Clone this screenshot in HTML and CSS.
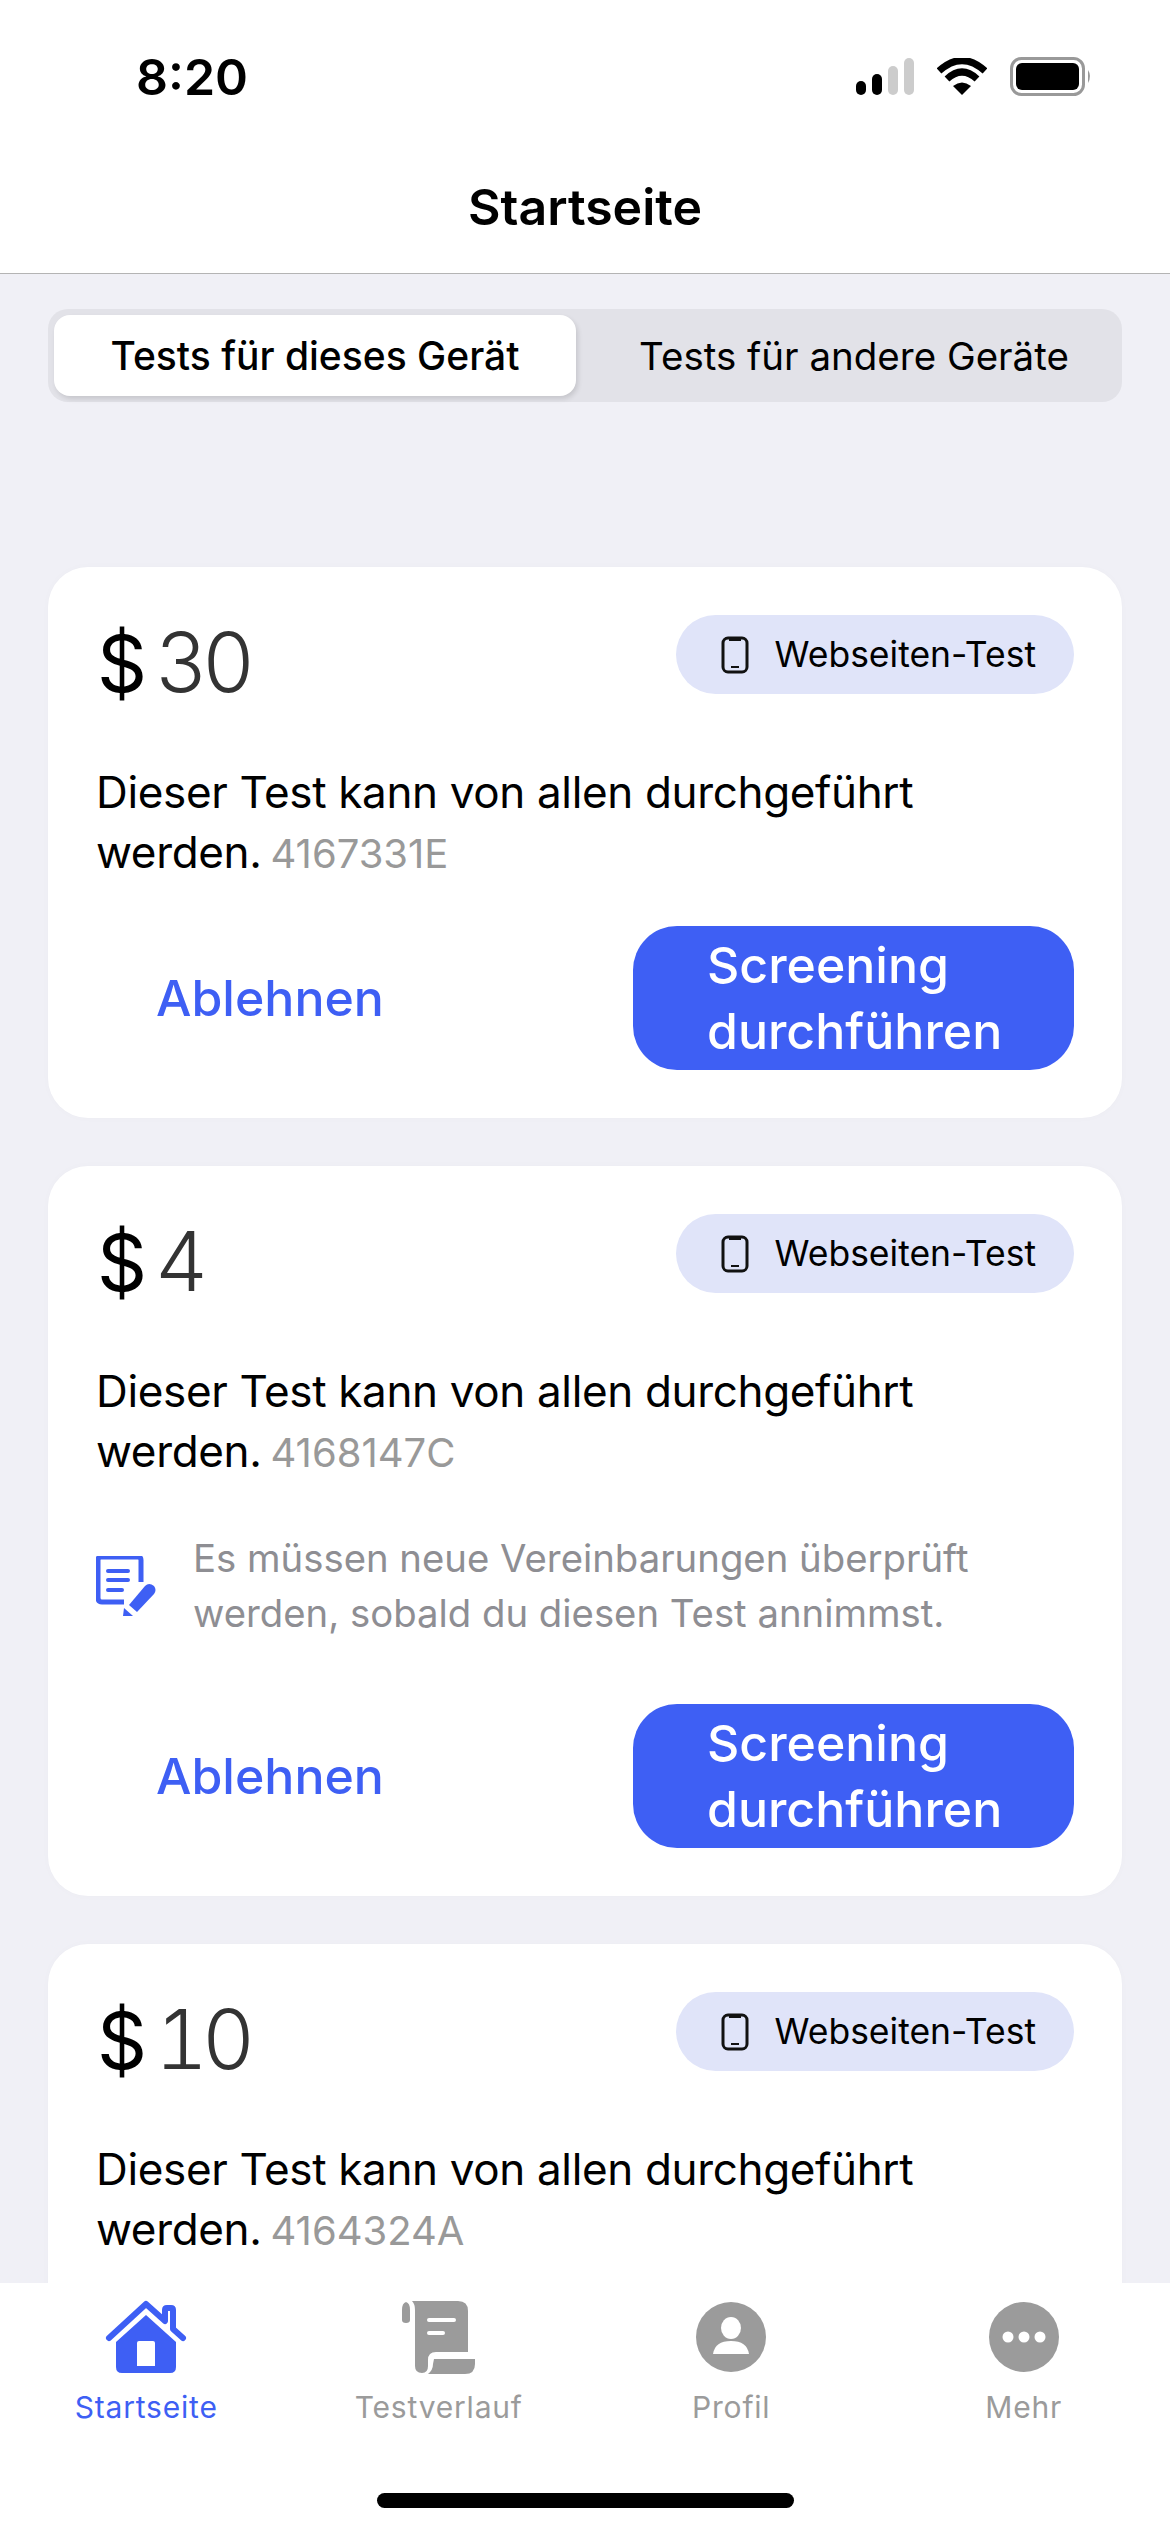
FILE: index.html
```html
<!DOCTYPE html>
<html lang="de">
<head>
  <meta charset="UTF-8">
  <meta name="viewport" content="width=device-width, initial-scale=1.0">
  <title>Startseite</title>
  <link rel="stylesheet" href="styles.css">
</head>
<body>
  <div class="app">
    <div class="top">
      <div class="status">
        <span class="time">8:20</span>
        <div class="status-icons">
          <svg width="58" height="38" viewBox="0 0 58 38"><rect x="0" y="23" width="10" height="14" rx="5" fill="#000"/><rect x="16" y="16" width="10" height="21" rx="5" fill="#000"/><rect x="32" y="8" width="10" height="29" rx="5" fill="#ccc"/><rect x="48" y="0" width="10" height="37" rx="5" fill="#ccc"/></svg>
          <svg class="wifi" width="50" height="38" viewBox="0 0 50 38"><path d="M25 37 L16 28 Q25 21 34 28 Z" fill="#000"/><path d="M2 13 Q25 -8 48 13" fill="none" stroke="#000" stroke-width="7"/><path d="M10 21 Q25 7 40 21" fill="none" stroke="#000" stroke-width="7"/></svg>
          <svg class="battery" width="82" height="40" viewBox="0 0 82 40"><rect x="1.5" y="1.5" width="72" height="36" rx="10" fill="none" stroke="#999" stroke-width="3"/><rect x="6" y="6" width="63" height="27" rx="6" fill="#000"/><path d="M78 13 Q82 19 78 26 Z" fill="#999"/></svg>
        </div>
      </div>
      <h1 class="title">Startseite</h1>
    </div>

    <div class="content">
      <div class="segment">
        <div class="seg-item seg-active">Tests für dieses Gerät</div>
        <div class="seg-item">Tests für andere Geräte</div>
      </div>

      <div class="card">
        <div class="card-head">
          <div class="price"><span class="cur">$</span>30</div>
          <div class="chip">
            <svg width="28" height="38" viewBox="0 0 28 38"><rect x="2" y="2" width="24" height="34" rx="5" fill="none" stroke="#111" stroke-width="3"/><path d="M8 4 H20 M10 31 H18" stroke="#111" stroke-width="2"/></svg>
            Webseiten-Test
          </div>
        </div>
        <p class="desc">Dieser Test kann von allen durchgeführt werden. <span class="code">4167331E</span></p>
        <div class="actions">
          <span class="decline">Ablehnen</span>
          <button class="go">Screening durchführen</button>
        </div>
      </div>

      <div class="card">
        <div class="card-head">
          <div class="price"><span class="cur">$</span>4</div>
          <div class="chip">
            <svg width="28" height="38" viewBox="0 0 28 38"><rect x="2" y="2" width="24" height="34" rx="5" fill="none" stroke="#111" stroke-width="3"/><path d="M8 4 H20 M10 31 H18" stroke="#111" stroke-width="2"/></svg>
            Webseiten-Test
          </div>
        </div>
        <p class="desc">Dieser Test kann von allen durchgeführt werden. <span class="code">4168147C</span></p>
        <div class="note">
          <svg width="60" height="60" viewBox="0 0 60 60"><path d="M28 46 H6 Q2 46 2 42 V4 Q2 1 5 1 H42 Q45 1 45 4 V26" fill="none" stroke="#3e5ff4" stroke-width="5"/><path d="M12 15 H32 M12 24 H32 M12 34 H26" stroke="#3e5ff4" stroke-width="4" stroke-linecap="round"/><path d="M33 49 L49 30 Q53 26 58 30 Q61 34 58 38 L41 56 Z" fill="#3e5ff4"/><path d="M28 52 L37 60 L27 60 Z" fill="#3e5ff4"/></svg>
          <span>Es müssen neue Vereinbarungen überprüft werden, sobald du diesen Test annimmst.</span>
        </div>
        <div class="actions">
          <span class="decline">Ablehnen</span>
          <button class="go">Screening durchführen</button>
        </div>
      </div>

      <div class="card">
        <div class="card-head">
          <div class="price"><span class="cur">$</span>10</div>
          <div class="chip">
            <svg width="28" height="38" viewBox="0 0 28 38"><rect x="2" y="2" width="24" height="34" rx="5" fill="none" stroke="#111" stroke-width="3"/><path d="M8 4 H20 M10 31 H18" stroke="#111" stroke-width="2"/></svg>
            Webseiten-Test
          </div>
        </div>
        <p class="desc">Dieser Test kann von allen durchgeführt werden. <span class="code">4164324A</span></p>
      </div>
    </div>

    <div class="tabbar">
      <div class="tabs">
        <div class="tab tab-active">
          <svg width="82" height="74" viewBox="0 0 82 74"><path d="M4 38 L41 4 L60 21 V10 Q60 8 62 8 H66 Q68 8 68 10 V29 L78 38" fill="none" stroke="#3e5ff4" stroke-width="6" stroke-linecap="round" stroke-linejoin="round"/><path d="M41 15 L71 42 V67 Q71 73 65 73 H17 Q11 73 11 67 V42 Z M32 43 Q32 41 34 41 H48 Q50 41 50 43 V66 H32 Z" fill="#3e5ff4" fill-rule="evenodd"/></svg>
          <span>Startseite</span>
        </div>
        <div class="tab">
          <svg width="74" height="74" viewBox="0 0 74 74"><path d="M10 1 H56 Q66 1 66 11 V52 H34 Q26 52 26 60 V66 Q26 73 20 73 Q13 73 13 66 V10 Q13 4 10 1 Z" fill="#9b9b9b"/><path d="M0 10 Q0 3 4 2 Q8 3 8 10 V20 Q8 23 4 23 Q0 23 0 20 Z M32 59 H73 V64 Q73 74 63 74 H26 Q31 70 31 64 Z" fill="#9b9b9b"/><path d="M27 20 H52 M27 33 H41" stroke="#fff" stroke-width="4" stroke-linecap="round"/></svg>
          <span>Testverlauf</span>
        </div>
        <div class="tab">
          <svg width="70" height="74" viewBox="0 0 70 70"><circle cx="35" cy="35" r="35" fill="#9b9b9b"/><ellipse cx="35" cy="26" rx="10" ry="11" fill="#fff"/><path d="M17 52 Q19 39 35 39 Q51 39 53 52 Z" fill="#fff"/></svg>
          <span>Profil</span>
        </div>
        <div class="tab">
          <svg width="70" height="74" viewBox="0 0 70 70"><circle cx="35" cy="35" r="35" fill="#9b9b9b"/><circle cx="19" cy="35" r="5.5" fill="#fff"/><circle cx="35" cy="35" r="5.5" fill="#fff"/><circle cx="51" cy="35" r="5.5" fill="#fff"/></svg>
          <span>Mehr</span>
        </div>
      </div>
      <div class="home-bar"></div>
    </div>
  </div>
</body>
</html>
```

FILE: styles.css
```css
body {
  font-family: Inter, "Liberation Sans", sans-serif;
  margin: 0;
  padding: 0;
  color: #000;
  background-color: #f0f0f6;
}

.app {
  width: 1170px;
  height: 2532px;
  display: flex;
  flex-direction: column;
  overflow: hidden;
}

.top {
  height: 273px;
  flex-shrink: 0;
  background-color: #fff;
  border-bottom: 1px solid #b4b4b4;
}

.status {
  display: flex;
  justify-content: space-between;
  align-items: center;
  height: 38px;
  padding: 58px 78px 0 136px;
}

.time {
  font-size: 50px;
  font-weight: 600;
}

.status-icons {
  display: flex;
  align-items: center;
  gap: 23px;
}

.title {
  margin: 0;
  padding-top: 81px;
  font-size: 50px;
  line-height: 60px;
  font-weight: 600;
  text-align: center;
}

.content {
  flex: 1;
  min-height: 0;
  overflow: hidden;
  padding: 35px 48px 0;
}

.segment {
  display: flex;
  height: 93px;
  box-sizing: border-box;
  padding: 6px;
  margin-bottom: 165px;
  border-radius: 20px;
  background-color: #e2e2e8;
}

.seg-item {
  display: flex;
  align-items: center;
  justify-content: center;
  box-sizing: border-box;
  width: 540px;
  padding-left: 16px;
  font-size: 38.5px;
}

.seg-active {
  width: 522px;
  padding-left: 0;
  font-size: 39px;
  font-weight: 500;
  background-color: #fff;
  border-radius: 16px;
  box-shadow: 2px 3px 5px rgba(0, 0, 0, 0.12);
}

.card {
  padding: 48px;
  margin-bottom: 48px;
  background-color: #fff;
  border-radius: 40px;
  box-shadow: 0 0 8px rgba(0, 0, 0, 0.02);
}

.card-head {
  display: flex;
  justify-content: space-between;
  align-items: flex-start;
}

.price {
  height: 79px;
  font-size: 82px;
  line-height: 95px;
  font-weight: 300;
  font-variant-numeric: tabular-nums;
  letter-spacing: -6px;
  color: #333;
  padding-left: 1px;
}

.cur {
  color: #000;
  margin-right: 8px;
  font-size: 78px;
  font-weight: 400;
  letter-spacing: 0;
}

.chip {
  display: flex;
  align-items: center;
  gap: 26px;
  height: 79px;
  box-sizing: border-box;
  padding: 0 38px 0 45px;
  border-radius: 40px;
  background-color: #e0e4f9;
  font-size: 35.5px;
}

.desc {
  margin: 68px 0 42px;
  max-width: 900px;
  font-size: 44px;
  letter-spacing: -0.35px;
  line-height: 60px;
}

.code {
  margin-left: -3px;
  font-size: 40px;
  letter-spacing: 0;
  color: #999;
}

.note {
  display: flex;
  align-items: center;
  gap: 37px;
  margin: 48px 0 63px;
  font-size: 38.3px;
  line-height: 55px;
  color: #8e8e93;
}

.note span {
  max-width: 800px;
}

.actions {
  display: flex;
  justify-content: space-between;
  align-items: center;
}

.decline {
  padding-left: 60px;
  font-size: 50px;
  font-weight: 500;
  color: #3e5ff4;
}

.go {
  width: 441px;
  height: 144px;
  padding: 0 60px 0 74px;
  border: none;
  border-radius: 44px;
  background-color: #3e5ff4;
  color: #fff;
  font-family: inherit;
  font-size: 50px;
  line-height: 66px;
  font-weight: 500;
  text-align: left;
}

.tabbar {
  height: 249px;
  flex-shrink: 0;
  background-color: #fff;
}

.tabs {
  display: grid;
  grid-template-columns: repeat(4, 1fr);
  padding-top: 17px;
}

.tab {
  display: flex;
  flex-direction: column;
  align-items: center;
  gap: 15px;
  font-size: 30px;
  letter-spacing: 0.8px;
  color: #9b9b9b;
}

.tab-active {
  color: #3e5ff4;
}

.home-bar {
  width: 417px;
  height: 15px;
  margin: 68px auto 0;
  border-radius: 8px;
  background-color: #000;
}
```
